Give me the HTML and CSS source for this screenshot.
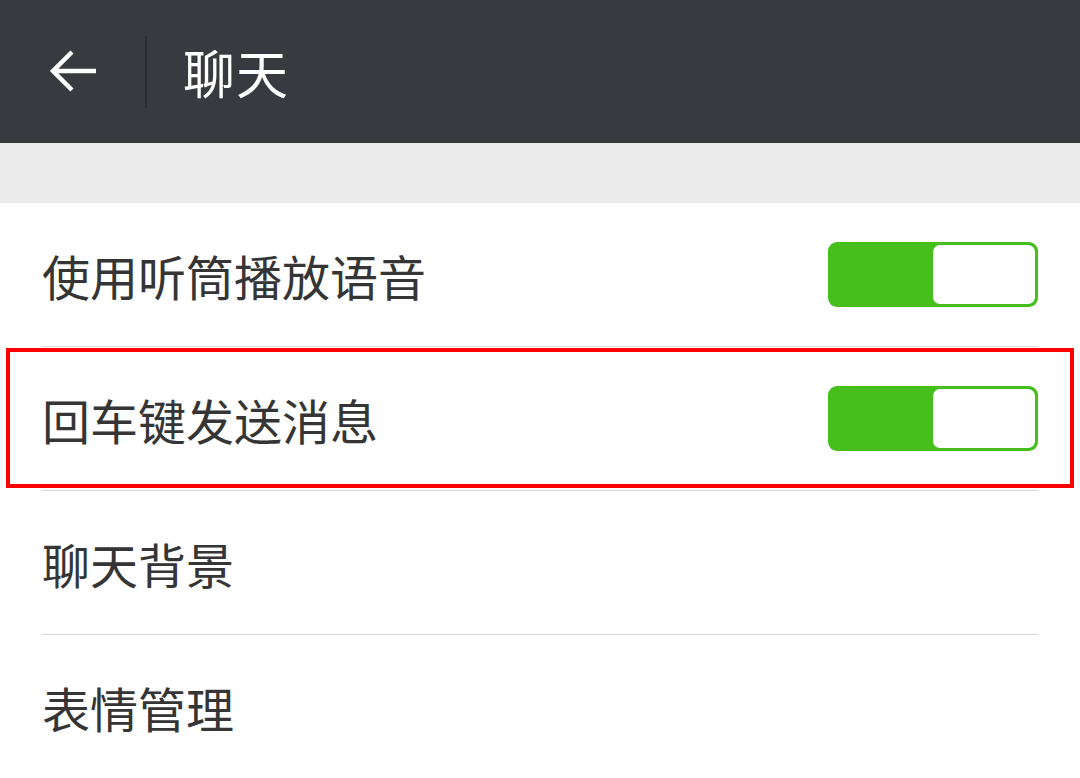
FILE: index.html
```html
<!DOCTYPE html>
<html lang="zh-CN">
<head>
<meta charset="utf-8">
<title>聊天</title>
<link rel="stylesheet" href="styles.css">
</head>
<body>
<div class="app">
  <header class="topbar">
    <div class="back">
      <svg width="50" height="50" viewBox="0 0 50 50">
        <path d="M48 24H5M24 5L5 24L24 43" fill="none" stroke="#ffffff" stroke-width="4.5" stroke-linecap="butt" stroke-linejoin="miter"/>
      </svg>
    </div>
    <div class="vdiv"></div>
    <h1 class="title">聊天</h1>
  </header>
  <div class="gap"></div>
  <ul class="list">
    <li class="row"><span class="label">使用听筒播放语音</span><span class="switch on"><span class="knob"></span></span></li>
    <li class="row"><span class="label">回车键发送消息</span><span class="switch on"><span class="knob"></span></span></li>
    <li class="row"><span class="label">聊天背景</span></li>
    <li class="row"><span class="label">表情管理</span></li>
  </ul>
  <div class="highlight"></div>
</div>
</body>
</html>
```

FILE: styles.css
```css
* { box-sizing: border-box; }
html, body { margin: 0; padding: 0; }
body {
  width: 1080px;
  height: 778px;
  overflow: hidden;
  background: #ffffff;
  font-family: "Noto Sans CJK SC", "Noto Sans", sans-serif;
}
.app { position: relative; width: 1080px; height: 778px; }
.topbar {
  height: 143px;
  background: #393a3f;
  display: flex;
  align-items: center;
}
.back {
  width: 145px;
  padding-left: 48px;
  display: flex;
  align-items: center;
  height: 50px;
}
.back svg { display: block; }
.vdiv {
  width: 2px;
  height: 72px;
  background: #2c2d31;
}
.title {
  margin: 0 0 0 36px;
  color: #ffffff;
  font-size: 52px;
  font-weight: 400;
  line-height: 1;
  letter-spacing: 1px;
}
.gap { height: 60px; background: #ebebeb; }
.list { list-style: none; margin: 0; padding: 0 42px; }
.row {
  height: 144px;
  display: flex;
  align-items: center;
  justify-content: space-between;
  border-bottom: 1px solid #d9d9d9;
}
.row:last-child { border-bottom: none; }
.label {
  font-size: 48px;
  color: #353535;
  line-height: 1;
}
.switch {
  width: 210px;
  height: 65px;
  border-radius: 9px;
  background: #46bf1d;
  padding: 3px;
  display: flex;
  justify-content: flex-end;
}
.knob {
  width: 102px;
  height: 59px;
  background: #ffffff;
  border-radius: 7px;
}
.highlight {
  position: absolute;
  left: 6px;
  top: 348px;
  width: 1068px;
  height: 140px;
  border: 4px solid #ff0000;
  pointer-events: none;
}
```
